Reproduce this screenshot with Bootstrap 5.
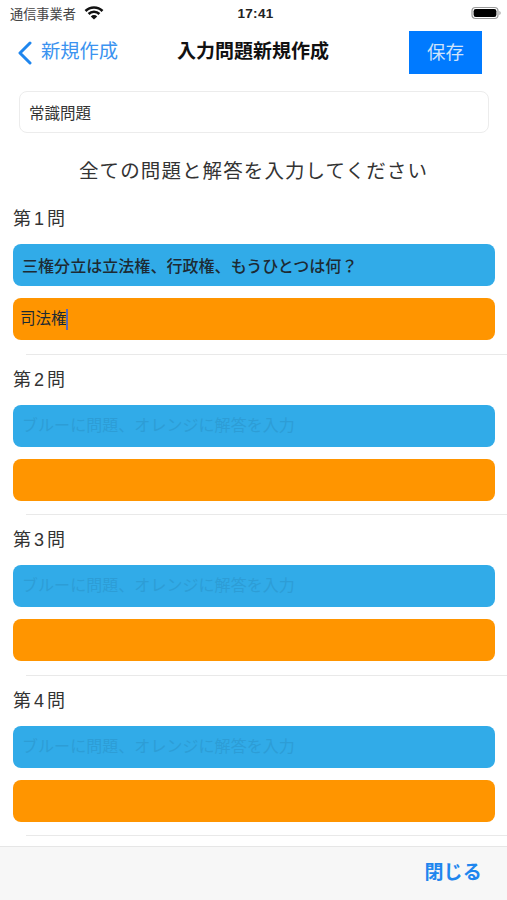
<!DOCTYPE html>
<html lang="ja">
<head>
<meta charset="utf-8">
<title>入力問題新規作成</title>
<link href="https://cdn.jsdelivr.net/npm/bootstrap@5.3.0/dist/css/bootstrap.min.css" rel="stylesheet">
<style>
html,body{height:100%;overflow:hidden}
body{font-family:"Liberation Sans","Noto Sans CJK JP",sans-serif;color:#222;background:#fff}
.phone{height:900px;width:507px;overflow:hidden}
.phone>*{flex-shrink:0}
.statusbar{height:28px;padding:1px 6px 0 10px;font-size:13.2px;color:#444}
.statusbar .carrier{width:66px;white-space:nowrap}
.statusbar svg{margin-bottom:3px}
.clock{font-size:13.5px;font-weight:700;color:#222;letter-spacing:.3px}
.side{width:160px}
.topbar{height:45px;margin-top:2px;padding-left:17px;padding-right:25px}
.backlink{color:#3b93f0;font-size:19.3px;gap:9px;text-decoration:none;width:80px;white-space:nowrap}
.title-text{font-size:19px;font-weight:700;color:#111;margin:0;flex:1;text-align:center}
.savebtn{width:73px;height:43px;border-radius:0;background:#007aff;border:0;color:#cfe3fa;font-size:18.5px;padding:0}
.namebox{margin:16px 18px 0 19px;height:42px;width:470px;border:1px solid #ececec;border-radius:8px;font-size:15.5px;padding:0 9px;color:#333;box-shadow:none}
.lead-text{font-size:19.5px;letter-spacing:1.1px;text-align:center;margin:25px 0 0;line-height:26px;color:#333}
.qlist{margin-top:22px}
.qitem{height:160.5px;position:relative}
.qitem::after{content:"";position:absolute;left:26px;right:0;bottom:12px;border-bottom:1px solid #e9e9e9}
.qnum{font-size:18px;line-height:26px;padding-left:13px;color:#333;margin:0 0 12px;word-spacing:-2px}
.qfield{display:block;margin:0 12px 12px 13px;width:482px;height:42px;border-radius:8px;border:0;font-size:16px;color:#1d2a33;box-shadow:none}
.qblue,.qblue:focus{background:#31abe8;padding:0 9px}
.qorange,.qorange:focus{background:#ff9500;padding:0 7px}
.qblue::placeholder{color:#2d9dd6;opacity:1;font-weight:400}
.qblue{font-weight:500;letter-spacing:.05px}
.answer{display:flex;align-items:center;font-size:15.5px}
.caretbar{display:inline-block;width:2px;height:21px;background:#5d68b8;margin-left:-1px}
.footbar{height:54px;background:#f7f7f7;border-top:1px solid #e6e6e6;padding-right:25px}
.closelink{color:#1f86ee;font-size:19px;font-weight:700;text-decoration:none;letter-spacing:.2px;margin-top:-1px}
.qscroll{flex:1 1 0;min-height:0;overflow:hidden}
</style>
</head>
<body>
<div class="phone d-flex flex-column">
  <div class="statusbar d-flex align-items-center justify-content-between">
    <div class="side d-flex align-items-center gap-2">
      <span class="carrier">通信事業者</span>
      <svg width="20" height="14" viewBox="0 0 20 14"><path d="M1.5 5A12 12 0 0 1 18.5 5" fill="none" stroke="#111" stroke-width="2.6"/><path d="M4.6 8A7.6 7.6 0 0 1 15.4 8" fill="none" stroke="#111" stroke-width="2.6"/><path d="M10 13.5L6.8 10.4A4.6 4.6 0 0 1 13.2 10.4Z" fill="#111"/></svg>
    </div>
    <span class="clock">17:41</span>
    <div class="side d-flex justify-content-end">
      <svg width="30" height="14" viewBox="0 0 30 14"><rect x="1" y="1.5" width="26" height="11" rx="3.5" fill="none" stroke="#999" stroke-width="1.2"/><rect x="2.6" y="3" width="22.8" height="8" rx="2.2" fill="#000"/><path d="M28.3 5v4c.9-.3 1.4-1.1 1.4-2s-.5-1.7-1.4-2z" fill="#aaa"/></svg>
    </div>
  </div>
  <nav class="topbar d-flex align-items-center">
    <a href="#" class="backlink d-flex align-items-center">
      <svg width="15" height="24" viewBox="0 0 15 24" class="flex-shrink-0"><path d="M13 2L3 12L13 22" fill="none" stroke="#1f86ee" stroke-width="3" stroke-linecap="round" stroke-linejoin="round"/></svg>
      <span>新規作成</span>
    </a>
    <h1 class="title-text">入力問題新規作成</h1>
    <button type="button" class="btn savebtn">保存</button>
  </nav>
  <input class="form-control namebox" value="常識問題" aria-label="問題集名">
  <p class="lead-text">全ての問題と解答を入力してください</p>
  <div class="qlist qscroll">
    <section class="qitem">
      <p class="qnum">第 1 問</p>
      <input class="form-control qfield qblue" value="三権分立は立法権、行政権、もうひとつは何？" aria-label="問題1">
      <div class="qfield qorange answer"><span>司法権</span><span class="caretbar"></span></div>
    </section>
    <section class="qitem">
      <p class="qnum">第 2 問</p>
      <input class="form-control qfield qblue" placeholder="ブルーに問題、オレンジに解答を入力" aria-label="問題2">
      <input class="form-control qfield qorange" aria-label="解答2">
    </section>
    <section class="qitem">
      <p class="qnum">第 3 問</p>
      <input class="form-control qfield qblue" placeholder="ブルーに問題、オレンジに解答を入力" aria-label="問題3">
      <input class="form-control qfield qorange" aria-label="解答3">
    </section>
    <section class="qitem">
      <p class="qnum">第 4 問</p>
      <input class="form-control qfield qblue" placeholder="ブルーに問題、オレンジに解答を入力" aria-label="問題4">
      <input class="form-control qfield qorange" aria-label="解答4">
    </section>
  </div>
  <footer class="footbar d-flex align-items-center justify-content-end">
    <a href="#" class="closelink">閉じる</a>
  </footer>
</div>
<script src="https://cdn.jsdelivr.net/npm/bootstrap@5.3.0/dist/js/bootstrap.bundle.min.js"></script>
</body>
</html>
